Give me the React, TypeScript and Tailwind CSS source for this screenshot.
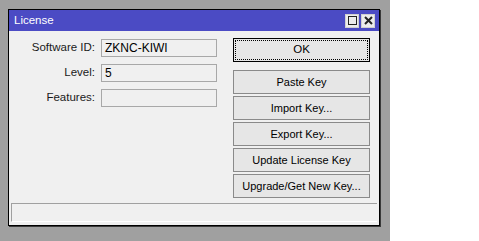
import { ReactNode } from 'react'

const font = { fontFamily: '"Liberation Sans", Arial, sans-serif' }

function Field({ label, value }: { label: string; value?: string }) {
    return (
        <div className="flex items-center h-[17px]">
            <div className="w-[92px] text-right pr-[6px] text-[11.5px] text-[#1a1a1a]">{label}</div>
            <div className="w-[116px] h-[18px] border border-[#a8a8a8] bg-[#f0f0f0] pl-[3px] text-[12px] leading-[16px] text-black">
                {value}
            </div>
        </div>
    )
}

function Btn({ children, focused = false }: { children: ReactNode; focused?: boolean }) {
    if (focused) {
        return (
            <div className="h-[24px] border border-black bg-[#e6e6e6] p-[1px]">
                <div className="h-full border border-dotted border-black flex items-center justify-center text-[11.5px] text-black">
                    {children}
                </div>
            </div>
        )
    }
    return (
        <div className="h-[24px] border border-[#8a8a8a] bg-[#e6e6e6] flex items-center justify-center text-[11px] text-black">
            {children}
        </div>
    )
}

export default function App() {
    return (
        <div className="w-[479px] h-[241px] bg-white flex" style={font}>
            <div className="w-[390px] h-full bg-[#a0a0a0] pt-[9px] pl-[8px]">
                <div className="w-[372px] h-[217px] border border-black bg-[#f0f0f0] shadow-[1px_1px_0_#3a3a3a] flex flex-col">
                    <div className="h-[21px] bg-[#4b4bc4] flex items-center pl-[5px] pr-[4px]">
                        <span className="text-white text-[11.5px] flex-1">License</span>
                        <div className="flex gap-[2px]">
                            <div className="w-[14px] h-[14px] bg-[#ececec] border border-[#d0d0d0] flex items-center justify-center">
                                <div className="w-[9px] h-[9px] border-[1.5px] border-[#222]" />
                            </div>
                            <div className="w-[14px] h-[14px] bg-[#ececec] border border-[#d0d0d0] flex items-center justify-center">
                                <svg width="9" height="9" viewBox="0 0 9 9">
                                    <path d="M1 1L8 8M8 1L1 8" stroke="#222" strokeWidth="2" />
                                </svg>
                            </div>
                        </div>
                    </div>
                    <div className="flex flex-1 pt-[7px]">
                        <div className="w-[224px] flex flex-col gap-[8px] pt-[1px]">
                            <Field label="Software ID:" value="ZKNC-KIWI" />
                            <Field label="Level:" value="5" />
                            <Field label="Features:" />
                        </div>
                        <div className="w-[137px] flex flex-col">
                            <Btn focused>OK</Btn>
                            <div className="h-[8px]" />
                            <div className="flex flex-col gap-[2px]">
                                <Btn>Paste Key</Btn>
                                <Btn>Import Key...</Btn>
                                <Btn>Export Key...</Btn>
                                <Btn>Update License Key</Btn>
                                <Btn>Upgrade/Get New Key...</Btn>
                            </div>
                        </div>
                    </div>
                    <div className="mx-[2px] mb-[3px] h-[19px] border-t border-l border-[#a0a0a0] border-b border-b-white" />
                </div>
            </div>
        </div>
    )
}
